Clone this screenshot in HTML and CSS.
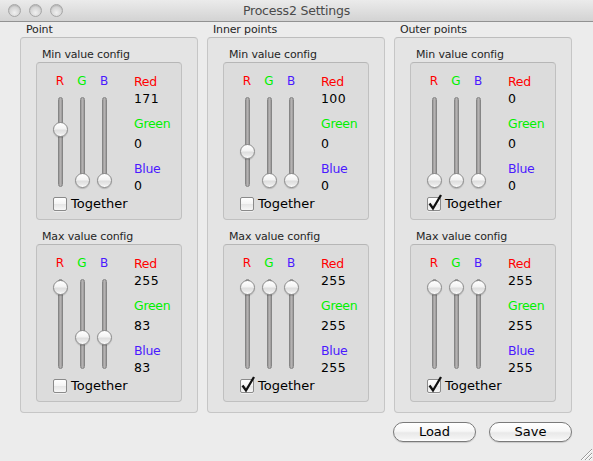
FILE: index.html
```html
<!DOCTYPE html>
<html lang="en">
<head>
<meta charset="utf-8">
<title>Process2 Settings</title>
<link rel="stylesheet" href="styles.css">
</head>
<body>
<div class="window">
  <header class="titlebar">
    <div class="lights"><span class="light"></span><span class="light"></span><span class="light"></span></div>
    <div class="title">Process2 Settings</div>
    <div></div>
  </header>
  <main class="content">
    <div class="groups">
      <section class="group">
        <div class="glabel">Point</div>
        <div class="gbox">
          <div class="clabel">Min value config</div>
          <div class="cfg">
            <div class="top">
              <div class="sliders">
                <div class="ch"><span class="lbl red">R</span><div class="track"><span class="knob" style="top:24px"></span></div></div>
                <div class="ch"><span class="lbl green">G</span><div class="track"><span class="knob" style="top:75px"></span></div></div>
                <div class="ch"><span class="lbl blue">B</span><div class="track"><span class="knob" style="top:75px"></span></div></div>
              </div>
              <div class="vals">
                <div class="name red">Red</div><div class="val v1">171</div>
                <div class="name green n2">Green</div><div class="val v2">0</div>
                <div class="name blue n3">Blue</div><div class="val v1">0</div>
              </div>
            </div>
            <label class="tog"><span class="cb"></span><span>Together</span></label>
          </div>
          <div class="clabel gap">Max value config</div>
          <div class="cfg">
            <div class="top">
              <div class="sliders">
                <div class="ch"><span class="lbl red">R</span><div class="track"><span class="knob" style="top:0px"></span></div></div>
                <div class="ch"><span class="lbl green">G</span><div class="track"><span class="knob" style="top:50px"></span></div></div>
                <div class="ch"><span class="lbl blue">B</span><div class="track"><span class="knob" style="top:50px"></span></div></div>
              </div>
              <div class="vals">
                <div class="name red">Red</div><div class="val v1">255</div>
                <div class="name green n2">Green</div><div class="val v2">83</div>
                <div class="name blue n3">Blue</div><div class="val v1">83</div>
              </div>
            </div>
            <label class="tog"><span class="cb"></span><span>Together</span></label>
          </div>
        </div>
      </section>

      <section class="group">
        <div class="glabel">Inner points</div>
        <div class="gbox">
          <div class="clabel">Min value config</div>
          <div class="cfg">
            <div class="top">
              <div class="sliders">
                <div class="ch"><span class="lbl red">R</span><div class="track"><span class="knob" style="top:46px"></span></div></div>
                <div class="ch"><span class="lbl green">G</span><div class="track"><span class="knob" style="top:75px"></span></div></div>
                <div class="ch"><span class="lbl blue">B</span><div class="track"><span class="knob" style="top:75px"></span></div></div>
              </div>
              <div class="vals">
                <div class="name red">Red</div><div class="val v1">100</div>
                <div class="name green n2">Green</div><div class="val v2">0</div>
                <div class="name blue n3">Blue</div><div class="val v1">0</div>
              </div>
            </div>
            <label class="tog"><span class="cb"></span><span>Together</span></label>
          </div>
          <div class="clabel gap">Max value config</div>
          <div class="cfg">
            <div class="top">
              <div class="sliders">
                <div class="ch"><span class="lbl red">R</span><div class="track"><span class="knob" style="top:0px"></span></div></div>
                <div class="ch"><span class="lbl green">G</span><div class="track"><span class="knob" style="top:0px"></span></div></div>
                <div class="ch"><span class="lbl blue">B</span><div class="track"><span class="knob" style="top:0px"></span></div></div>
              </div>
              <div class="vals">
                <div class="name red">Red</div><div class="val v1">255</div>
                <div class="name green n2">Green</div><div class="val v2">255</div>
                <div class="name blue n3">Blue</div><div class="val v1">255</div>
              </div>
            </div>
            <label class="tog"><span class="cb"><svg class="check" width="16" height="16" viewBox="0 0 16 16"><path d="M2.5 6.5 L6 11.5 L14 -2"/></svg></span><span>Together</span></label>
          </div>
        </div>
      </section>

      <section class="group">
        <div class="glabel">Outer points</div>
        <div class="gbox">
          <div class="clabel">Min value config</div>
          <div class="cfg">
            <div class="top">
              <div class="sliders">
                <div class="ch"><span class="lbl red">R</span><div class="track"><span class="knob" style="top:75px"></span></div></div>
                <div class="ch"><span class="lbl green">G</span><div class="track"><span class="knob" style="top:75px"></span></div></div>
                <div class="ch"><span class="lbl blue">B</span><div class="track"><span class="knob" style="top:75px"></span></div></div>
              </div>
              <div class="vals">
                <div class="name red">Red</div><div class="val v1">0</div>
                <div class="name green n2">Green</div><div class="val v2">0</div>
                <div class="name blue n3">Blue</div><div class="val v1">0</div>
              </div>
            </div>
            <label class="tog"><span class="cb"><svg class="check" width="16" height="16" viewBox="0 0 16 16"><path d="M2.5 6.5 L6 11.5 L14 -2"/></svg></span><span>Together</span></label>
          </div>
          <div class="clabel gap">Max value config</div>
          <div class="cfg">
            <div class="top">
              <div class="sliders">
                <div class="ch"><span class="lbl red">R</span><div class="track"><span class="knob" style="top:0px"></span></div></div>
                <div class="ch"><span class="lbl green">G</span><div class="track"><span class="knob" style="top:0px"></span></div></div>
                <div class="ch"><span class="lbl blue">B</span><div class="track"><span class="knob" style="top:0px"></span></div></div>
              </div>
              <div class="vals">
                <div class="name red">Red</div><div class="val v1">255</div>
                <div class="name green n2">Green</div><div class="val v2">255</div>
                <div class="name blue n3">Blue</div><div class="val v1">255</div>
              </div>
            </div>
            <label class="tog"><span class="cb"><svg class="check" width="16" height="16" viewBox="0 0 16 16"><path d="M2.5 6.5 L6 11.5 L14 -2"/></svg></span><span>Together</span></label>
          </div>
        </div>
      </section>
    </div>
    <div class="buttons">
      <button class="btn">Load</button>
      <button class="btn">Save</button>
    </div>
  </main>
  <svg class="grip" width="12" height="12" viewBox="0 0 12 12">
    <path class="g-dark" d="M1 12 L12 1 M5 12 L12 5 M9 12 L12 9"/>
    <path class="g-light" d="M2 12 L12 2 M6 12 L12 6 M10 12 L12 10"/>
  </svg>
</div>
</body>
</html>
```
FILE: styles.css
```css
* { box-sizing: border-box; }

html, body {
  margin: 0;
  padding: 0;
  background: #ececec;
}

body {
  font-family: "DejaVu Sans", "Liberation Sans", sans-serif;
  color: #000;
}

.window {
  position: relative;
  width: 593px;
  height: 461px;
  background: #ececec;
  overflow: hidden;
}

/* Title bar */
.titlebar {
  height: 22px;
  border-bottom: 1px solid #929292;
  background: linear-gradient(#ebebeb, #d3d3d3);
  display: grid;
  grid-template-columns: 1fr auto 1fr;
  align-items: center;
}

.lights {
  display: flex;
  gap: 8px;
  padding-left: 8px;
  padding-bottom: 1px;
}

.light {
  width: 13px;
  height: 13px;
  border-radius: 50%;
  border: 1px solid #a6a6a6;
  background: radial-gradient(circle at 50% 70%, #f0f0f0 0%, #dadada 45%, #c4c4c4 100%);
  box-shadow: inset 0 1px 1px rgba(0, 0, 0, 0.12);
}

.title {
  font-size: 12.5px;
  letter-spacing: -0.2px;
  color: #4a4a4a;
  line-height: 21px;
}

/* Content */
.content {
  padding: 0 21px 0 20px;
}

.groups {
  display: flex;
  gap: 9px;
}

.group {
  width: 178px;
}

.glabel,
.clabel {
  font-size: 11px;
  line-height: 15px;
  height: 15px;
  padding-left: 6px;
  color: #262626;
  letter-spacing: -0.15px;
  white-space: nowrap;
}

.clabel.gap {
  margin-top: 9px;
}

.gbox {
  border: 1px solid #c6c6c6;
  border-top-color: #bdbdbd;
  border-radius: 4px;
  background: #e4e4e4;
  padding: 9px 15px 10px;
}

.cfg {
  height: 158px;
  border: 1px solid #c0c0c0;
  border-top-color: #b6b6b6;
  border-radius: 4px;
  background: #dcdcdc;
  padding: 11px 0 0 12px;
}

.top {
  display: flex;
  height: 123px;
}

.sliders {
  display: flex;
  width: 66px;
}

.ch {
  width: 22px;
  display: flex;
  flex-direction: column;
}

.lbl {
  text-align: center;
  font-size: 12px;
  line-height: 15px;
  height: 15px;
}

.track {
  position: relative;
  width: 5px;
  height: 90px;
  margin-top: 8px;
  margin-left: 9px;
  border-radius: 3px;
  border: 1px solid #858585;
  background: linear-gradient(to right, #9a9898, #b4b2b2 50%, #9a9898);
}

.knob {
  position: absolute;
  left: -6px;
  width: 15px;
  height: 15px;
  border-radius: 50%;
  border: 1px solid #8b8b8b;
  background: linear-gradient(#ffffff 0%, #f3f3f3 45%, #dedede 55%, #e9e9e9 80%, #ffffff 100%);
  box-shadow: 0 1px 1px rgba(0, 0, 0, 0.18);
}

.red { color: #ff0000; }
.green { color: #00f000; }
.blue { color: #4a1aff; }

.vals {
  margin-left: 19px;
  font-size: 12.5px;
  line-height: 15px;
  letter-spacing: -0.3px;
}

.name, .val { height: 15px; white-space: nowrap; }
.val.v1 { margin-top: 2px; letter-spacing: 0.4px; }
.val.v2 { margin-top: 5px; letter-spacing: 0.4px; }
.name.n2 { margin-top: 10px; }
.name.n3 { margin-top: 10px; }

.tog {
  display: flex;
  align-items: center;
  gap: 4px;
  height: 14px;
  padding-left: 4px;
  font-size: 13px;
  line-height: 14px;
  color: #000;
}

.cb {
  position: relative;
  width: 14px;
  height: 14px;
  flex: none;
  border: 1px solid #8a8a8a;
  border-radius: 2px;
  background: linear-gradient(#ffffff, #f4f4f4 50%, #e6e6e6 52%, #f7f7f7);
  box-shadow: 0 1px 0 rgba(255, 255, 255, 0.5);
}

.check {
  position: absolute;
  left: -1px;
  top: -1px;
  overflow: visible;
}

.check path {
  fill: none;
  stroke: #111;
  stroke-width: 2.3;
  stroke-linejoin: miter;
  stroke-linecap: butt;
}

/* Buttons */
.buttons {
  display: flex;
  justify-content: flex-end;
  gap: 13px;
  margin-top: 9px;
}

.btn {
  width: 83px;
  height: 20px;
  padding: 0;
  border: 1px solid #7a7a7a;
  border-radius: 10px;
  background: linear-gradient(#ffffff 0%, #f7f7f7 45%, #e9e9e9 55%, #f2f2f2 85%, #ffffff 100%);
  box-shadow: 0 1px 1px rgba(0, 0, 0, 0.15);
  font-family: "DejaVu Sans", "Liberation Sans", sans-serif;
  font-size: 13px;
  line-height: 18px;
  color: #000;
}

/* Resize grip */
.grip {
  position: absolute;
  right: 1px;
  bottom: 1px;
}

.g-dark { stroke: #9a9a9a; stroke-width: 1; fill: none; }
.g-light { stroke: #ffffff; stroke-width: 1; fill: none; }
```
